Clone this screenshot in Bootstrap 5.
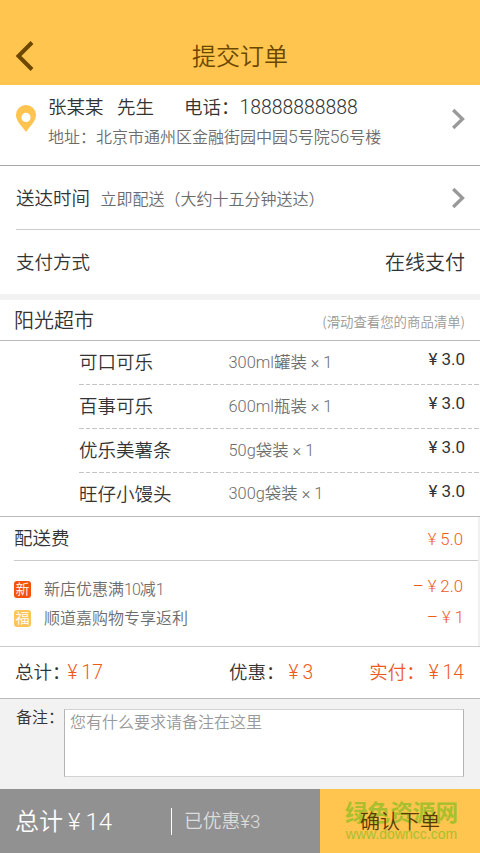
<!DOCTYPE html>
<html lang="zh-CN">
<head>
<meta charset="utf-8">
<meta name="viewport" content="width=device-width, initial-scale=1">
<title>提交订单</title>
<link href="https://cdn.jsdelivr.net/npm/bootstrap@5.3.0/dist/css/bootstrap.min.css" rel="stylesheet">
<style>
body{font-family:Roboto,"Noto Sans CJK SC",sans-serif;font-weight:350;color:#333;line-height:1.25;width:480px;height:853px;overflow:hidden;background:#fff}
span,div{white-space:nowrap}
.topbar{height:85px;background:#ffc54e;color:#6b4700;padding:29px 15px 0}
.topbar h1{font-size:24px;font-weight:350;line-height:56px}
.side-slot{width:20px}
.addr{height:81px;border-bottom:1px solid #a9a9a9;padding:0 15px 0 16px}
.pin{margin-top:20px;width:20px}
.addr-text{margin-left:12px;padding-top:11px}
.person{font-size:18.5px;line-height:25px}
.person-name{width:69px}
.person-title{width:67px}
.phone{font-size:19.4px;line-height:24px}
.place{padding-top:7px}
.place .digits{font-size:17.5px;line-height:1}
.addr-arrow{margin-top:-13px}
.muted{font-size:16px;color:#6c6c6c}
.deliver{height:64px;margin-left:16px;padding-right:15px;border-bottom:1px solid #ccc}
.when{margin-left:10.5px;padding-top:5px}
.lbl{font-size:18.5px}
.deliver .lbl{padding-top:5px}
.pay{height:70px;padding:2px 15px 0 16px;border-bottom:6px solid #f2f2f2}
.pay .lbl{padding-top:1px}
.lg20{font-size:20px}
.shop{height:41px;padding:2px 15px 0 14px;border-bottom:1px solid #bbb}
.hint{font-size:13.4px;color:#999;padding-top:3px}
.hint i{font-style:normal;font-family:"Noto Sans CJK SC",sans-serif}
.goods{border-bottom:1px solid #bbb}
.item{height:44px;margin-left:79px;padding:2px 15px 0 0;background:repeating-linear-gradient(90deg,#c4c4c4 0 4.7px,#fff 4.7px 6.7px) bottom/100% 1px no-repeat}
.item:last-child{background:none;height:43px}
.item-name{width:149.5px;font-size:18.5px}
.spec{font-size:16.4px;color:#6c6c6c;padding-bottom:2px}
.price{font-size:17px;font-weight:400;gap:4px;padding-bottom:8px}
.fees{border-right:2px solid #f0f0f0;height:129px}
.fee{height:44px;margin-left:14px;padding:2px 15px 0 0;border-bottom:1px solid #ccc}
.orange{color:#ee5a1c}
.amt{font-size:16.8px;gap:4px}
.promo{padding:14px 15px 0 14px}
.promo-row{height:29px}
.tag{width:17px;height:17px;border-radius:3px;font-size:14px;line-height:17px;color:#fff;text-align:center}
.tag-new{background:#f4510b}
.tag-luck{background:#fec45c}
.promo-txt{margin-left:13px;font-size:16px;color:#6c6c6c}
.ten{letter-spacing:-1px}
.off-a{padding-bottom:7px}
.off-b{padding-bottom:2px}
.totals{height:53px;border-top:1px solid #ccc;border-bottom:1px solid #bbb;padding:2px 16px 0 15px;font-size:18.5px}
.totals .num{font-size:19.3px;gap:4px}
.colon{margin-right:-3px}
.sum-a{width:161.500px}
.remark{height:90px;background:#f2f2f2;padding:10px 16px 0 16px}
.remark-lbl{width:48px;font-size:16px;line-height:17px}
.note-box{height:68px;border:1px solid #b4b4b4;border-top-color:#d2d2d2;border-bottom-color:#d2d2d2;background:#fff;color:#999;font-size:16px;line-height:25px;padding-left:5px}
.foot{height:64px}
.sum{width:320px;background:#919191;color:#fff;padding:1px 0 0 15px}
.sum-total{width:156px;font-size:24px;gap:5px;padding-top:1px}
.split{width:1px;height:27px;background:#fff}
.saved{font-size:18.8px;color:#ddd;margin-left:12px;padding-top:2px}
.confirm{width:160px;background:#ffc54e;color:#5c3900;font-size:20px;font-weight:350;border-radius:0;position:relative}
.wm{position:absolute;left:25px;top:12px;width:113px;color:#a9bf2d;font-family:"Liberation Sans","Noto Sans CJK SC",sans-serif}
.wm b{display:block;font-size:22.6px;line-height:26px;font-weight:700}
.wm small{display:block;font-size:14px;line-height:14px}
.confirm-txt{position:relative;top:1px}
</style>
<script src="https://cdn.jsdelivr.net/npm/bootstrap@5.3.0/dist/js/bootstrap.bundle.min.js"></script>
</head>
<body>
<header class="topbar d-flex justify-content-between">
  <a class="side-slot" href="#" aria-label="返回"><svg class="d-block" width="20" height="54" viewBox="0 0 20 54" fill="none" stroke="#6b4700" stroke-width="4"><path d="M17 13.500 3.500 27 17 40.500"/></svg></a>
  <h1 class="m-0">提交订单</h1>
  <span class="side-slot"></span>
</header>
<main>
  <section class="addr d-flex">
    <svg class="pin flex-shrink-0" width="20" height="28" viewBox="0 0 20 28"><path fill="#ffc44f" fill-rule="evenodd" d="M10 0a10 10 0 0 1 10 10.300C20 16.500 13 22.500 10 27 7 22.500 0 16.500 0 10.300A10 10 0 0 1 10 0Zm0 7.800a4.600 4.600 0 1 0 0 9.200 4.600 4.600 0 0 0 0-9.200Z"/></svg>
    <div class="addr-text flex-grow-1">
      <div class="person d-flex"><span class="person-name">张某某</span><span class="person-title">先生</span><span>电话：</span><span class="phone">18888888888</span></div>
      <div class="muted place">地址：北京市通州区金融街园中园<span class="digits">5</span>号院<span class="digits">56</span>号楼</div>
    </div>
    <svg class="addr-arrow align-self-center" width="13" height="22" viewBox="0 0 13 22" fill="none" stroke="#999" stroke-width="3.300"><path d="M1.200 2l9.300 9-9.300 9"/></svg>
  </section>
  <section class="deliver d-flex align-items-center">
    <span class="lbl">送达时间</span><span class="muted when">立即配送（大约十五分钟送达）</span>
    <svg class="ms-auto" width="13" height="22" viewBox="0 0 13 22" fill="none" stroke="#999" stroke-width="3.300"><path d="M1.200 2l9.300 9-9.300 9"/></svg>
  </section>
  <section class="pay d-flex align-items-center justify-content-between"><span class="lbl">支付方式</span><span class="lg20">在线支付</span></section>
  <section class="shop d-flex align-items-center justify-content-between"><span class="lg20">阳光超市</span><span class="hint"><i>(</i>滑动查看您的商品清单<i>)</i></span></section>
  <section class="goods">
    <div class="item d-flex align-items-center"><span class="item-name">可口可乐</span><span class="spec">300ml罐装 × 1</span><span class="price d-flex ms-auto"><span>¥</span><span>3.0</span></span></div>
    <div class="item d-flex align-items-center"><span class="item-name">百事可乐</span><span class="spec">600ml瓶装 × 1</span><span class="price d-flex ms-auto"><span>¥</span><span>3.0</span></span></div>
    <div class="item d-flex align-items-center"><span class="item-name">优乐美薯条</span><span class="spec">50g袋装 × 1</span><span class="price d-flex ms-auto"><span>¥</span><span>3.0</span></span></div>
    <div class="item d-flex align-items-center"><span class="item-name">旺仔小馒头</span><span class="spec">300g袋装 × 1</span><span class="price d-flex ms-auto"><span>¥</span><span>3.0</span></span></div>
  </section>
  <section class="fees">
    <div class="fee d-flex align-items-center justify-content-between"><span class="lbl">配送费</span><span class="amt orange d-flex"><span>¥</span><span>5.0</span></span></div>
    <div class="promo">
      <div class="promo-row d-flex align-items-center"><span class="tag tag-new">新</span><span class="promo-txt">新店优惠满<span class="ten">10</span>减1</span><span class="amt orange d-flex ms-auto off-a"><span>–</span><span>¥</span><span>2.0</span></span></div>
      <div class="promo-row d-flex align-items-center"><span class="tag tag-luck">福</span><span class="promo-txt">顺道嘉购物专享返利</span><span class="amt orange d-flex ms-auto off-b"><span>–</span><span>¥</span><span class="ten">1</span></span></div>
    </div>
  </section>
  <section class="totals d-flex align-items-center">
    <span class="colon">总计：</span><span class="num orange d-flex sum-a"><span>¥</span><span>17</span></span>
    <span class="me-1">优惠：</span><span class="num orange d-flex"><span>¥</span><span>3</span></span>
    <span class="orange ms-auto me-1">实付：</span><span class="num orange d-flex"><span>¥</span><span>14</span></span>
  </section>
  <section class="remark d-flex"><span class="remark-lbl">备注：</span><div class="note-box flex-grow-1">您有什么要求请备注在这里</div></section>
</main>
<footer class="foot d-flex">
  <div class="sum d-flex align-items-center"><span class="sum-total d-flex"><span>总计</span><span>¥</span><span>14</span></span><span class="split"></span><span class="saved">已优惠¥3</span></div>
  <button class="confirm btn border-0 p-0" type="button"><span class="wm"><b>绿色资源网</b><small>www.downcc.com</small></span><span class="confirm-txt">确认下单</span></button>
</footer>
</body>
</html>
